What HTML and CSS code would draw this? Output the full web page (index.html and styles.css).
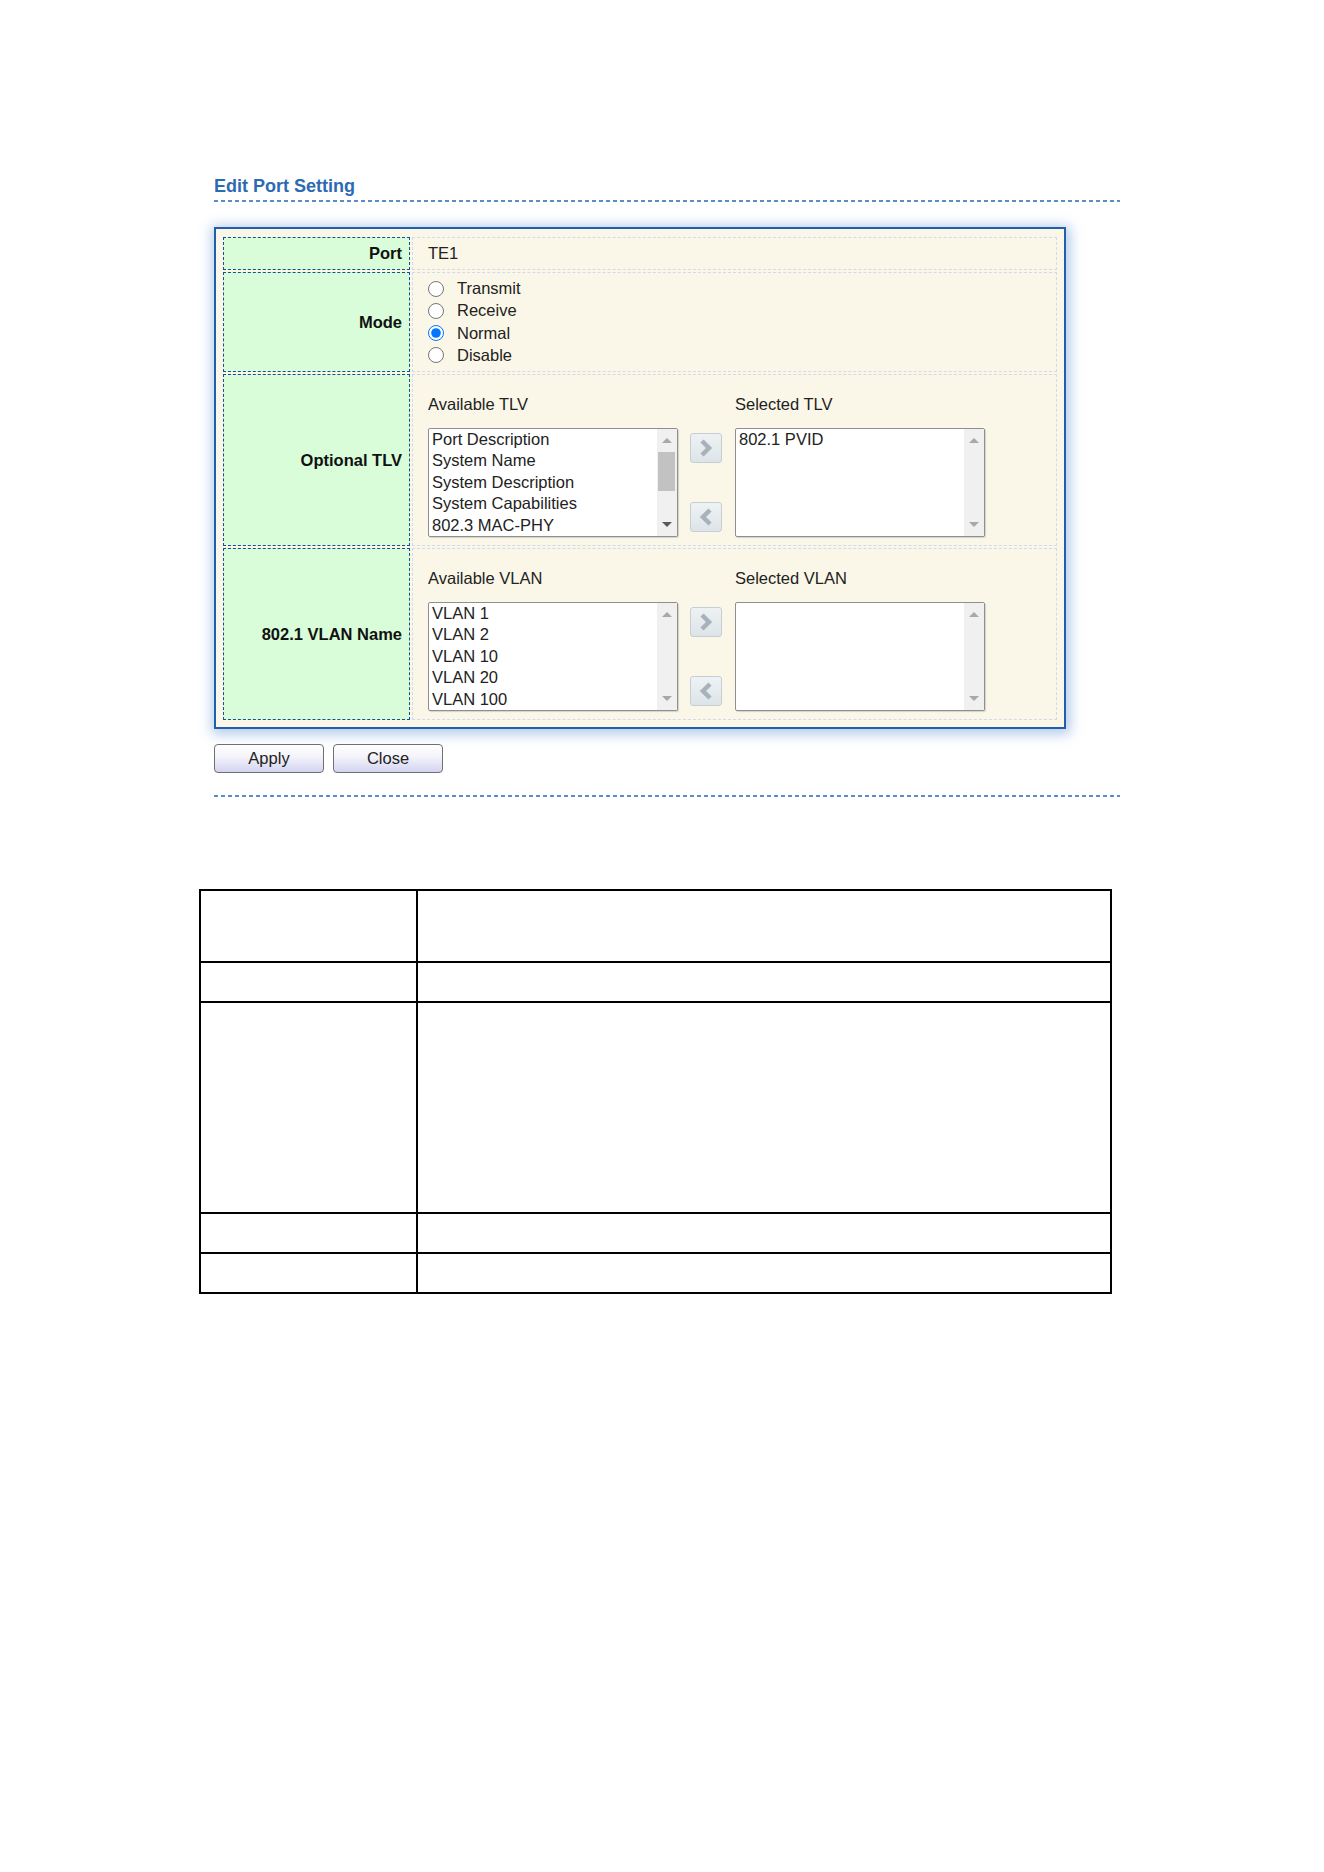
FILE: index.html
```html
<!DOCTYPE html>
<html lang="en">
<head>
    <meta charset="UTF-8">
    <meta name="viewport" content="width=device-width, initial-scale=1.0">
    <title>Edit Port Setting</title>
    <link rel="stylesheet" href="styles.css">
</head>
<body>
    <div class="page">
        <h2 class="title">Edit Port Setting</h2>
        <div class="rule"></div>

        <div class="panel">
            <table class="form-table">
                <tr class="row-port">
                    <th>Port</th>
                    <td>TE1</td>
                </tr>
                <tr class="row-mode">
                    <th>Mode</th>
                    <td>
                        <label class="radio"><input type="radio" name="mode" value="transmit">Transmit</label>
                        <label class="radio"><input type="radio" name="mode" value="receive">Receive</label>
                        <label class="radio"><input type="radio" name="mode" value="normal" checked>Normal</label>
                        <label class="radio"><input type="radio" name="mode" value="disable">Disable</label>
                    </td>
                </tr>
                <tr class="row-picker">
                    <th>Optional TLV</th>
                    <td class="picker-cell">
                        <div class="picker">
                            <span class="pick-title">Available TLV</span>
                            <span></span>
                            <span class="pick-title">Selected TLV</span>

                            <div class="listbox">
                                <ul class="options">
                                    <li>Port Description</li>
                                    <li>System Name</li>
                                    <li>System Description</li>
                                    <li>System Capabilities</li>
                                    <li>802.3 MAC-PHY</li>
                                </ul>
                                <div class="scroll">
                                    <span class="arrow up"></span>
                                    <span class="thumb"></span>
                                    <span class="arrow down active"></span>
                                </div>
                            </div>
                            <div class="move">
                                <button class="move-btn" type="button">
                                    <svg viewBox="0 0 30 28" width="30" height="28"><polyline points="11,7 18,14 11,21" /></svg>
                                </button>
                                <button class="move-btn" type="button">
                                    <svg viewBox="0 0 30 28" width="30" height="28"><polyline points="19,7 12,14 19,21" /></svg>
                                </button>
                            </div>
                            <div class="listbox">
                                <ul class="options">
                                    <li>802.1 PVID</li>
                                </ul>
                                <div class="scroll">
                                    <span class="arrow up"></span>
                                    <span class="arrow down"></span>
                                </div>
                            </div>
                        </div>
                    </td>
                </tr>
                <tr class="row-picker">
                    <th>802.1 VLAN Name</th>
                    <td class="picker-cell">
                        <div class="picker">
                            <span class="pick-title">Available VLAN</span>
                            <span></span>
                            <span class="pick-title">Selected VLAN</span>

                            <div class="listbox">
                                <ul class="options">
                                    <li>VLAN 1</li>
                                    <li>VLAN 2</li>
                                    <li>VLAN 10</li>
                                    <li>VLAN 20</li>
                                    <li>VLAN 100</li>
                                </ul>
                                <div class="scroll">
                                    <span class="arrow up"></span>
                                    <span class="arrow down"></span>
                                </div>
                            </div>
                            <div class="move">
                                <button class="move-btn" type="button">
                                    <svg viewBox="0 0 30 28" width="30" height="28"><polyline points="11,7 18,14 11,21" /></svg>
                                </button>
                                <button class="move-btn" type="button">
                                    <svg viewBox="0 0 30 28" width="30" height="28"><polyline points="19,7 12,14 19,21" /></svg>
                                </button>
                            </div>
                            <div class="listbox">
                                <ul class="options"></ul>
                                <div class="scroll">
                                    <span class="arrow up"></span>
                                    <span class="arrow down"></span>
                                </div>
                            </div>
                        </div>
                    </td>
                </tr>
            </table>
        </div>

        <div class="actions">
            <button class="btn" type="button">Apply</button>
            <button class="btn" type="button">Close</button>
        </div>
        <div class="rule bottom"></div>
    </div>

    <table class="desc-table">
        <tr class="r1"><td class="key"></td><td></td></tr>
        <tr class="r2"><td class="key"></td><td></td></tr>
        <tr class="r3"><td class="key"></td><td></td></tr>
        <tr class="r4"><td class="key"></td><td></td></tr>
        <tr class="r5"><td class="key"></td><td></td></tr>
    </table>
</body>
</html>
```

FILE: styles.css
```css
body {
    margin: 0;
    background: #fff;
    font-family: "Liberation Sans", Arial, sans-serif;
    font-size: 16.5px;
    color: #222;
}

.page {
    width: 906px;
    margin-left: 214px;
    padding-top: 175px;
}

.title {
    margin: 0;
    padding-bottom: 3px;
    font-size: 18px;
    line-height: 22px;
    font-weight: bold;
    color: #2d6ab4;
}

.rule {
    height: 2px;
    background: repeating-linear-gradient(to right, #5a8dca 0 4px, transparent 4px 7px);
}

.rule.bottom {
    margin-top: 22px;
}

.panel {
    box-sizing: border-box;
    width: 852px;
    margin-top: 25px;
    padding: 6px 5px 5px;
    background: #faf7e8;
    border: 2px solid #1f5fae;
    box-shadow: 1px 2px 12px 3px rgba(60, 120, 200, 0.4);
}

.form-table {
    width: 100%;
    border-collapse: separate;
    border-spacing: 2px;
}

.form-table th,
.form-table td {
    box-sizing: border-box;
}

.form-table th {
    width: 187px;
    padding: 0 7px 0 0;
    background: #d9fdd9;
    border: 1px dashed #174f94;
    text-align: right;
    font-weight: bold;
    color: #111;
}

.form-table td {
    padding: 0 0 0 15px;
    border: 1px dashed #d3d8ee;
    vertical-align: middle;
}

.row-port th, .row-port td { height: 33px; }
.row-mode th, .row-mode td { height: 100px; }
.row-picker th, .row-picker td { height: 172px; }

.radio {
    display: flex;
    align-items: center;
    height: 22.3px;
}

.radio input {
    width: 16px;
    height: 16px;
    margin: 0 13px 0 0;
}

.form-table td.picker-cell {
    vertical-align: top;
    padding: 18px 0 0 15px;
}

.picker {
    display: grid;
    grid-template-columns: 250px 57px 250px;
    row-gap: 13px;
}

.pick-title {
    line-height: 22px;
}

.listbox {
    box-sizing: border-box;
    height: 109px;
    display: flex;
    background: #fff;
    border: 1px solid #8f8f8f;
    border-radius: 2px;
    box-shadow: 1px 1px 1px rgba(0, 0, 0, 0.15);
}

.options {
    flex: 1;
    margin: 0;
    padding: 0 0 0 3px;
    list-style: none;
    line-height: 21.4px;
    color: #222;
}

.scroll {
    width: 20px;
    display: flex;
    flex-direction: column;
    background: #f0f0f0;
}

.arrow {
    height: 23px;
    display: flex;
    align-items: center;
    justify-content: center;
}

.arrow.down {
    margin-top: auto;
}

.arrow::after {
    content: "";
    border-left: 5px solid transparent;
    border-right: 5px solid transparent;
}

.arrow.up::after {
    border-bottom: 5px solid #a8a8a8;
}

.arrow.down::after {
    border-top: 5px solid #a8a8a8;
}

.arrow.down.active::after {
    border-top-color: #5a5a5a;
}

.thumb {
    height: 39px;
    margin: 0 2px 0 1px;
    background: #c2c2c2;
}

.move {
    display: flex;
    flex-direction: column;
    justify-content: space-between;
    padding: 5px 0 5px 12px;
}

.move-btn {
    width: 32px;
    height: 30px;
    padding: 0;
    border: 1px solid #c6ced5;
    border-radius: 3px;
    background: linear-gradient(#eef2f4, #dde4e8);
}

.move-btn svg {
    display: block;
}

.move-btn polyline {
    fill: none;
    stroke: #a8b2bb;
    stroke-width: 4.5;
}

.actions {
    display: flex;
    gap: 9px;
    margin-top: 15px;
}

.btn {
    width: 110px;
    height: 29px;
    padding: 0;
    font-family: inherit;
    font-size: 16.5px;
    color: #222;
    border: 1px solid #707070;
    border-radius: 4px;
    background: linear-gradient(#fff, #f3f3fb 45%, #d3d3f1);
}

.desc-table {
    width: 913px;
    margin: 92px 0 0 199px;
    border-collapse: collapse;
}

.desc-table td {
    padding: 0;
    border: 2px solid #000;
}

.desc-table .key {
    width: 215px;
}

.desc-table .r1 { height: 72px; }
.desc-table .r2 { height: 40px; }
.desc-table .r3 { height: 211px; }
.desc-table .r4 { height: 40px; }
.desc-table .r5 { height: 40px; }
```
